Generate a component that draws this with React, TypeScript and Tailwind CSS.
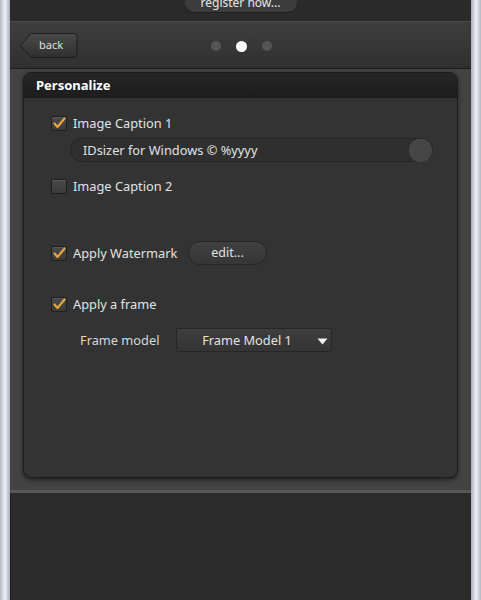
const font = "font-['Noto_Sans',_'DejaVu_Sans',_sans-serif]";

function Check({ checked }: { checked: boolean }) {
  return (
    <span className="flex h-[15px] w-[16px] shrink-0 items-center justify-center rounded-[2px] border border-[#1e1e1e] bg-gradient-to-b from-[#4a4a4a] to-[#3a3a3a] shadow-[inset_0_1px_0_rgba(255,255,255,0.08)]">
      {checked && (
        <svg width="13" height="12" viewBox="0 0 13 12">
          <path d="M1.5 6.5 L4.5 10 L11.5 1.5" fill="none" stroke="#e8a43a" strokeWidth="2.2" strokeLinecap="round" strokeLinejoin="round" />
        </svg>
      )}
    </span>
  );
}

function CheckRow({ checked, label, labelWidth }: { checked: boolean; label: string; labelWidth?: string }) {
  return (
    <div className="flex h-[16px] items-center gap-[6px]">
      <Check checked={checked} />
      <span className={`text-[12.8px] leading-[16px] text-[#e2e2e2] ${labelWidth ?? ""}`}>{label}</span>
    </div>
  );
}

function BackButton() {
  return (
    <div className="relative h-[27px] w-[58px]">
      <svg className="absolute inset-0" width="58" height="27" viewBox="0 0 58 27">
        <defs>
          <linearGradient id="bk" x1="0" y1="0" x2="0" y2="1">
            <stop offset="0" stopColor="#4a4a4a" />
            <stop offset="1" stopColor="#2f2f2f" />
          </linearGradient>
        </defs>
        <path d="M0.5 13.5 L11 1.5 L54 1.5 Q57 1.5 57 4.5 L57 22.5 Q57 25.5 54 25.5 L11 25.5 Z" fill="url(#bk)" stroke="#1c1c1c" />
      </svg>
      <span className="absolute inset-0 flex items-center justify-center pl-[4px] text-[11px] text-[#e0e0e0]">back</span>
    </div>
  );
}

export default function App() {
  return (
    <div className={`flex h-[600px] w-[481px] overflow-hidden ${font}`}>
      <div className="w-[10px] bg-gradient-to-r from-[#b4b9c2] via-[#eef1f6] to-[#a8aeb8]" />
      <div className="flex flex-1 flex-col bg-[#2b2b2b]">
        <div className="flex h-[21px] justify-center overflow-hidden bg-[#2a2a2a]">
          <div className="-mt-[6px] flex h-[18px] w-[112px] items-center justify-center rounded-full bg-[#3c3c3c] text-[12px] leading-[14px] text-[#e6e6e6] shadow-[0_1px_0_#1e1e1e]">
            register now...
          </div>
        </div>
        <div className="flex h-[48px] items-center border-t border-[#4a4a4a] border-b border-b-[#1c1c1c] bg-gradient-to-b from-[#3e3e3e] to-[#303030] pl-[10px]">
          <BackButton />
          <div className="ml-[133px] mt-[2px] flex items-center gap-[15px]">
            <span className="h-[10px] w-[10px] rounded-full bg-[#555]" />
            <span className="h-[11px] w-[11px] rounded-full bg-white" />
            <span className="h-[10px] w-[10px] rounded-full bg-[#555]" />
          </div>
        </div>
        <div className="bg-[#434343] px-[13px] pb-[12px] pt-[3px]">
          <div className="h-[406px] overflow-hidden rounded-[8px] border border-[#1c1c1c] bg-[#333333] shadow-[0_2px_4px_rgba(0,0,0,0.5)]">
            <div className="flex h-[25px] items-center bg-gradient-to-b from-[#262626] to-[#1d1d1d] pl-[12px] pt-[1px] text-[13px] font-bold text-white">
              Personalize
            </div>
            <div className="flex flex-col pl-[27px] pt-[17px]">
              <CheckRow checked label="Image Caption 1" />
              <div className="ml-[19px] mt-[7px] flex h-[24px] w-[363px] items-center justify-between rounded-full border border-[#262626] bg-[#2f2f2f] pl-[12px]">
                <span className="text-[12.8px] leading-[16px] text-[#e2e2e2]">IDsizer for Windows © %yyyy</span>
                <span className="h-[23px] w-[23px] rounded-full bg-[#464646] shadow-[inset_0_1px_0_rgba(255,255,255,0.06)]" />
              </div>
              <div className="mt-[16px]">
                <CheckRow checked={false} label="Image Caption 2" />
              </div>
              <div className="mt-[47px] flex h-[24px] items-center">
                <CheckRow checked label="Apply Watermark" labelWidth="w-[115px]" />
                <div className="flex h-[24px] w-[79px] items-center justify-center rounded-full border border-[#262626] bg-gradient-to-b from-[#404040] to-[#363636] text-[12.5px] leading-[16px] text-[#e2e2e2]">
                  edit...
                </div>
              </div>
              <div className="mt-[31px]">
                <CheckRow checked label="Apply a frame" />
              </div>
              <div className="mt-[16px] flex h-[24px] items-center pl-[29px]">
                <span className="w-[96px] text-[12.8px] leading-[16px] text-[#d8d8d8]">Frame model</span>
                <div className="relative flex h-[24px] w-[156px] items-center justify-center rounded-[3px] border border-[#262626] bg-gradient-to-b from-[#3e3e3e] to-[#343434] pr-[14px] text-[12.8px] leading-[16px] text-[#e2e2e2]">
                  Frame Model 1
                  <svg className="absolute right-[3px] top-[9px]" width="11" height="7" viewBox="0 0 11 7">
                    <path d="M0.5 0.5 L10.5 0.5 L5.5 6.5 Z" fill="#f0f0f0" />
                  </svg>
                </div>
              </div>
            </div>
          </div>
        </div>
        <div className="h-[3px] bg-[#575757]" />
        <div className="flex-1 border-l border-[#1e1e1e] bg-[#2b2b2b]" />
      </div>
      <div className="w-[10px] bg-gradient-to-r from-[#a8aeb8] via-[#eef1f6] to-[#b4b9c2]" />
    </div>
  );
}
